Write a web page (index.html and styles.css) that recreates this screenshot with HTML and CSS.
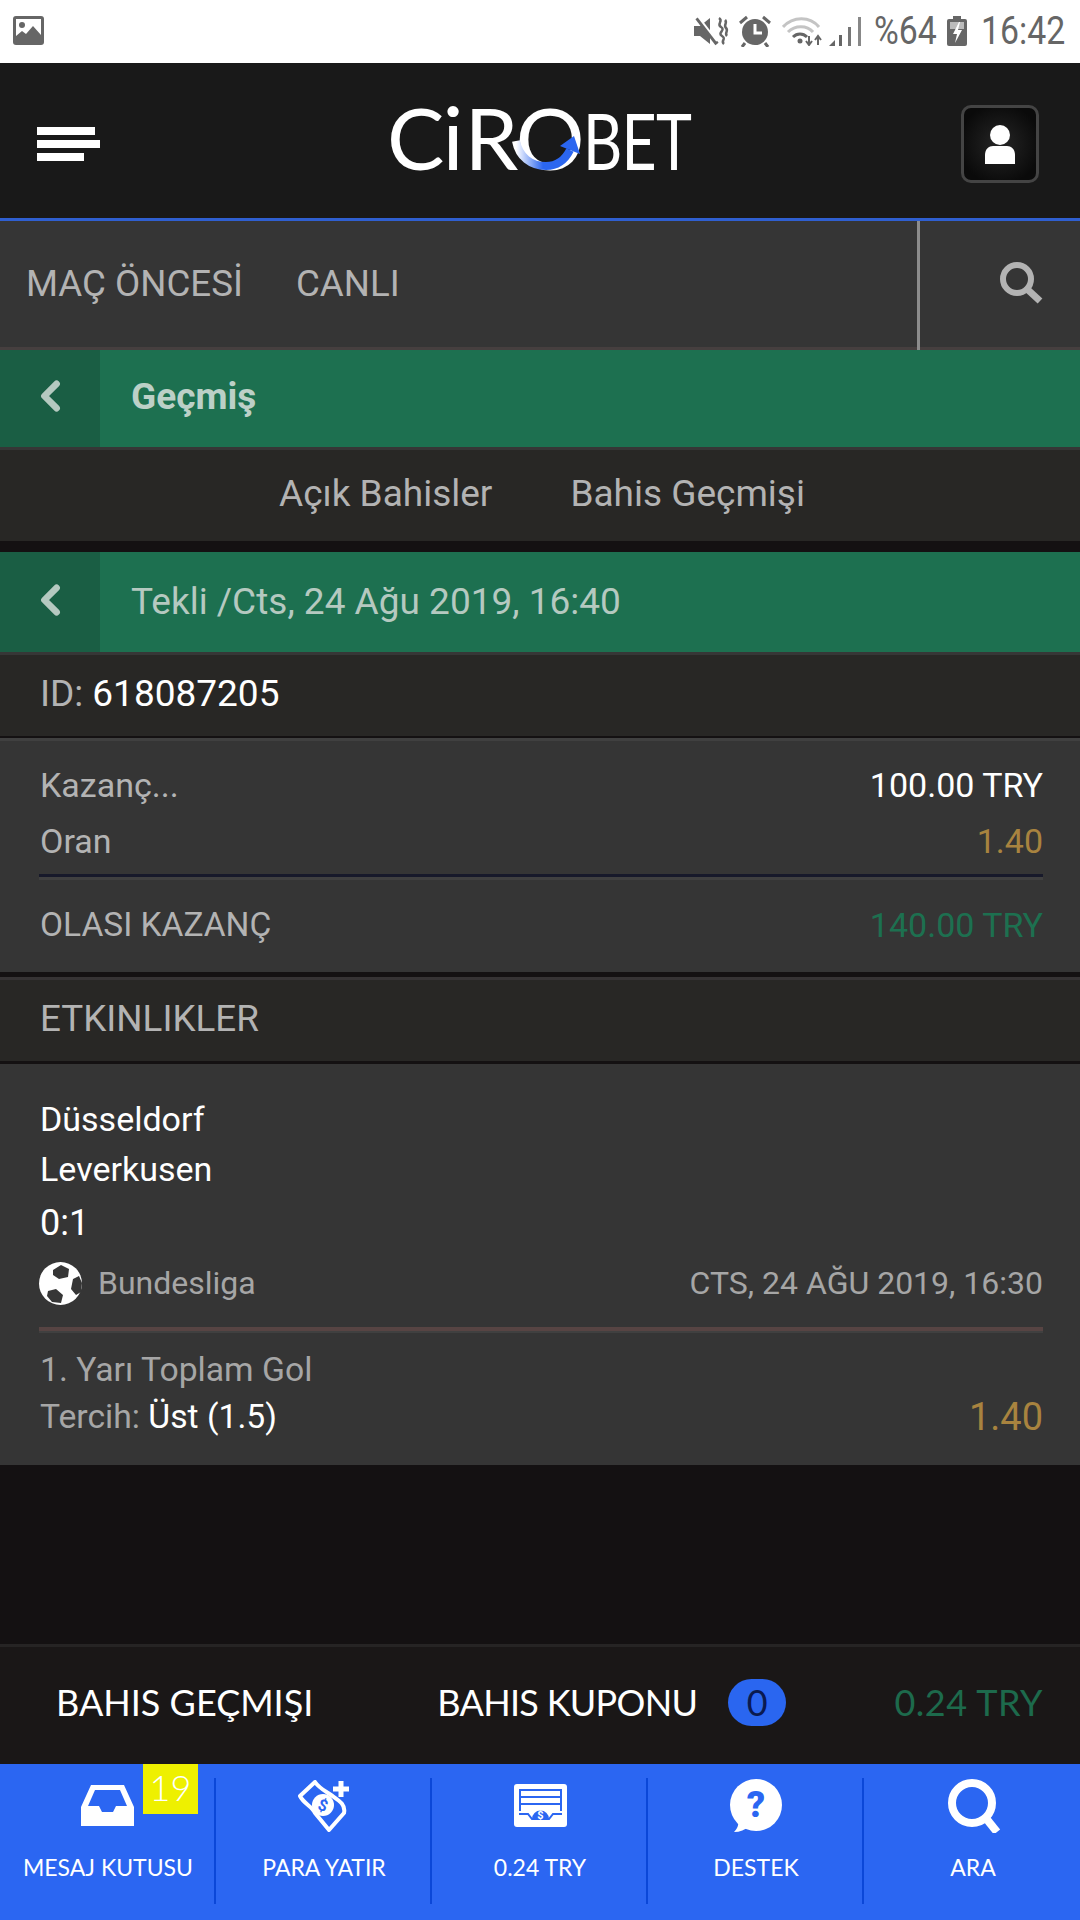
FILE: index.html
```html
<!DOCTYPE html>
<html lang="tr">
<head>
<meta charset="utf-8">
<title>Cirobet</title>
<link rel="stylesheet" href="styles.css">
</head>
<body>
<div class="status">
  <svg class="st-img" viewBox="0 0 31 29"><rect width="31" height="29" rx="3" fill="#666"/><rect x="3" y="3" width="25" height="23" fill="#fff"/><circle cx="9" cy="9" r="3" fill="#666"/><path d="M3 26v-6l6-5 4 3 7-8 8 9v7z" fill="#666"/></svg>
  <div class="st-right">
    <svg class="st-mute" viewBox="0 0 36 30"><path d="M0 10h6l10-8v26L6 20H0z" fill="#666"/><path d="M3 2l20 26" stroke="#666" stroke-width="4"/><path d="M3 -1l20 26" stroke="#fff" stroke-width="2"/><path d="M25 2c5 3-3 6 2 9s-4 6 1 9-2 5 2 8M31 4c3 3-2 5 1 8s-2 5 1 8" fill="none" stroke="#666" stroke-width="2.500"/></svg>
    <svg class="st-alarm" viewBox="0 0 32 32"><circle cx="16" cy="17" r="13" fill="#666"/><path d="M16 9v9h7" fill="none" stroke="#fff" stroke-width="3"/><path d="M1 8l7-6M31 8l-7-6M6 28l-3 4M26 28l3 4" stroke="#666" stroke-width="3"/></svg>
    <svg class="st-wifi" viewBox="0 0 40 30"><path d="M1 11c10-11 27-11 36 0" fill="none" stroke="#c4c4c4" stroke-width="3"/><path d="M6 16c7-7 19-7 25 0" fill="none" stroke="#c4c4c4" stroke-width="3"/><path d="M11 21c4-4 10-4 14 0" fill="none" stroke="#666" stroke-width="3"/><circle cx="18" cy="25" r="2.500" fill="#666"/><path d="M27 20v8M24 25l3 4 3-4M36 29v-9M33 24l3-4 3 4" fill="none" stroke="#666" stroke-width="2"/></svg>
    <svg class="st-sig" viewBox="0 0 32 30"><path d="M0 30l6-6v6z" fill="#666"/><rect x="10" y="19" width="3" height="11" fill="#666"/><rect x="19" y="11" width="3" height="19" fill="#777"/><rect x="29" y="1" width="3" height="29" fill="#888"/></svg>
    <span class="st-txt st-pct">%64</span>
    <svg class="st-batt" viewBox="0 0 20 30"><rect x="6" y="0" width="8" height="3" fill="#666"/><rect y="3" width="20" height="27" rx="2" fill="#666"/><rect x="3" y="6" width="14" height="7" fill="#bbb"/><path d="M12 6l-6 12h4l-2 9 7-13h-4l2-8z" fill="#fff"/></svg>
    <span class="st-txt st-time">16:42</span>
  </div>
</div>

<header class="head">
  <div class="burger"><i class="b1"></i><i class="b2"></i><i class="b3"></i></div>
  <div class="logo">
    <span class="logo-a">C<span class="logo-i">i</span>RO</span><span class="logo-b">BET</span>
    <svg class="logo-arc" viewBox="0 0 70 70">
      <defs><linearGradient id="arc" x1="0" y1="0" x2="1" y2="0"><stop offset="0" stop-color="#fff"/><stop offset=".5" stop-color="#2b66f0"/></linearGradient></defs>
      <path d="M5 37c3 16 15 25 30 25 11 0 19-6 24-16" fill="none" stroke="url(#arc)" stroke-width="8"/>
      <path d="M49 42l14-10 6 18z" fill="#2b66f0"/>
    </svg>
  </div>
  <div class="user">
    <svg class="user-ic" viewBox="0 0 30 39"><ellipse cx="15" cy="10" rx="10" ry="10" fill="#fff"/><path d="M0 39V30c0-6 4-9 8-9h14c4 0 8 3 8 9v9z" fill="#fff"/></svg>
  </div>
</header>

<nav class="nav">
  <div class="nav-links"><span>MAÇ ÖNCESİ</span><span>CANLI</span></div>
  <div class="nav-search">
    <svg class="nav-s-ic" viewBox="0 0 43 42"><circle cx="17" cy="17" r="14" fill="none" stroke="#b3b3b3" stroke-width="6"/><path d="M27 27l13 12" stroke="#b3b3b3" stroke-width="7"/></svg>
  </div>
</nav>

<div class="gbar gbar-1">
  <div class="gbar-back"><svg class="chev" viewBox="0 0 19 30"><path d="M15 4L4 15l11 11" fill="none" stroke="#b5c9c0" stroke-width="6" stroke-linecap="round" stroke-linejoin="round"/></svg></div>
  <div class="gbar-title gbar-bold">Geçmiş</div>
</div>
<div class="tabs-row"><span>Açık Bahisler</span><span>Bahis Geçmişi</span></div>

<div class="gbar gbar-2">
  <div class="gbar-back"><svg class="chev" viewBox="0 0 19 30"><path d="M15 4L4 15l11 11" fill="none" stroke="#b5c9c0" stroke-width="6" stroke-linecap="round" stroke-linejoin="round"/></svg></div>
  <div class="gbar-title">Tekli /Cts, 24 Ağu 2019, 16:40</div>
</div>
<div class="id-row">ID: <b>618087205</b></div>

<section class="panel">
  <div class="row"><span>Kazanç...</span><b>100.00 TRY</b></div>
  <div class="row"><span>Oran</span><em>1.40</em></div>
  <div class="rule"></div>
  <div class="row row-total"><span class="total-lbl">OLASI KAZANÇ</span><u>140.00 TRY</u></div>
</section>

<div class="sec-title">ETKINLIKLER</div>

<section class="event">
  <div class="team">Düsseldorf</div>
  <div class="team">Leverkusen</div>
  <div class="score">0:1</div>
  <div class="league">
    <svg class="ball" viewBox="0 0 43 43"><circle cx="21.500" cy="21.500" r="21.500" fill="#fff"/><path d="M14 8l8-5 8 4-1 8-9 2-6-4zM34 17l6-3 3 7-1 9-5 3-5-6zM9 29l8-2 7 6-2 8-9-1-5-6z" fill="#363636"/></svg>
    <span class="lg-name">Bundesliga</span>
    <span class="lg-date">CTS, 24 AĞU 2019, 16:30</span>
  </div>
  <div class="ev-rule"></div>
  <div class="market">1. Yarı Toplam Gol</div>
  <div class="pick"><span>Tercih: <b>Üst (1.5)</b></span><em>1.40</em></div>
</section>

<div class="spacer"></div>

<div class="betbar">
  <span class="bb-a">BAHIS GEÇMIŞI</span>
  <span class="bb-b">BAHIS KUPONU</span>
  <span class="bb-count">0</span>
  <span class="bb-val">0.24 TRY</span>
</div>

<div class="tabbar">
  <div class="tab">
    <span class="badge">19</span>
    <svg class="tab-ic ic-tray" viewBox="0 0 53 41"><path fill-rule="evenodd" fill="#fff" d="M10 0h33l10 22v19H0V22zM14 5l-7 16h11l3 6h11l3-6h11L39 5z"/></svg>
    <span class="tab-lbl">MESAJ KUTUSU</span>
  </div>
  <div class="tab">
    <svg class="tab-ic ic-money" viewBox="0 0 53 52"><path d="M17 2L2 16c4 8 12 10 15 17l14 17 15-17c2-9-6-13-13-18-6-4-12-7-16-13z" fill="none" stroke="#fff" stroke-width="4" stroke-linejoin="round"/><circle cx="25" cy="25" r="11" fill="#fff"/><text x="25" y="31" class="ic-dollar" transform="rotate(20 25 25)">$</text><path d="M43 1v16M35 9h16" stroke="#fff" stroke-width="5"/></svg>
    <span class="tab-lbl">PARA YATIR</span>
  </div>
  <div class="tab">
    <svg class="tab-ic ic-reg" viewBox="0 0 53 43"><rect width="53" height="43" rx="3" fill="#fff"/><rect x="5" y="5" width="43" height="26" fill="#2b66f2"/><path d="M7 7h39v5H7zM7 14h39v5H7zM7 21h39v6H7z" fill="#fff"/><rect x="5" y="27" width="43" height="5" fill="#fff"/><path d="M5 30h9l4 5h17l4-5h9" fill="none" stroke="#2b66f2" stroke-width="2"/><path d="M18 35a8.500 8.500 0 0 1 17 0z" fill="#2b66f2"/><text x="26.500" y="35" class="ic-dollar ic-d-s">$</text></svg>
    <span class="tab-lbl">0.24 TRY</span>
  </div>
  <div class="tab">
    <svg class="tab-ic ic-help" viewBox="0 0 53 53"><circle cx="27" cy="26" r="26" fill="#fff"/><path d="M9 40c1 5 0 9-4 13 6 0 11-2 15-6z" fill="#fff"/><text x="27" y="38" class="ic-q">?</text></svg>
    <span class="tab-lbl">DESTEK</span>
  </div>
  <div class="tab tab-last">
    <svg class="tab-ic ic-search" viewBox="0 0 54 54"><circle cx="25" cy="24" r="20" fill="none" stroke="#fff" stroke-width="8"/><path d="M38 38l12 15" stroke="#fff" stroke-width="8"/></svg>
    <span class="tab-lbl">ARA</span>
  </div>
</div>
</body>
</html>
```

FILE: styles.css
```css
* { box-sizing: border-box; }
html, body { margin: 0; padding: 0; }
body {
  width: 1080px;
  height: 1920px;
  overflow: hidden;
  display: flex;
  flex-direction: column;
  background: #141112;
  font-family: Roboto, "Liberation Sans", sans-serif;
  color: #b3b3b3;
}
b, em, u { font-weight: 400; font-style: normal; text-decoration: none; }

/* Status bar */
.status {
  flex: 0 0 63px;
  background: #fff;
  display: flex;
  align-items: center;
  justify-content: space-between;
  padding: 0 15px 2px 13px;
}
.st-img { width: 31px; height: 29px; display: block; }
.st-right { display: flex; align-items: center; }
.st-mute { width: 36px; height: 30px; margin-right: 9px; }
.st-alarm { width: 32px; height: 32px; margin-right: 11px; }
.st-wifi { width: 40px; height: 30px; margin-right: 7px; }
.st-sig { width: 32px; height: 30px; margin-right: 13px; }
.st-batt { width: 20px; height: 30px; margin-right: 14px; }
.st-txt {
  font-size: 38px;
  line-height: 40px;
  color: #666;
  display: inline-block;
  transform-origin: left center;
  transform: scaleX(.89);
}
.st-pct { width: 62px; margin-right: 11px; }
.st-time { width: 84px; }

/* Header */
.head {
  flex: 0 0 158px;
  background: #191919;
  border-bottom: 3px solid #2f5fd0;
  position: relative;
  display: flex;
  align-items: center;
  justify-content: space-between;
  padding: 7px 41px 0 37px;
}
.burger { display: flex; flex-direction: column; gap: 5px; }
.burger i { display: block; height: 8px; background: #fff; }
.b1 { width: 58px; }
.b2 { width: 63px; }
.b3 { width: 47px; }

.logo {
  position: relative;
  display: flex;
  align-items: baseline;
  font-family: Lato, sans-serif;
  color: #fff;
  line-height: 80px;
  margin-left: 15px;
  margin-bottom: 12px;
  width: 302px;
}
.logo-a { font-size: 86px; font-weight: 400; letter-spacing: -2px; }
.logo-i { font-size: 88px; letter-spacing: 1px; }
.logo-b {
  font-size: 78px;
  font-weight: 400;
  letter-spacing: -1px;
  display: inline-block;
  transform-origin: left bottom;
  transform: scaleX(.78);
}
.logo-arc { position: absolute; left: 124px; top: 8px; width: 70px; height: 70px; }

.user {
  width: 78px;
  height: 78px;
  border: 3px solid #444;
  border-radius: 10px;
  background: radial-gradient(circle, #262626 0%, #0a0a0a 80%);
  display: flex;
  align-items: center;
  justify-content: center;
}
.user-ic { width: 30px; height: 39px; display: block; }

/* Nav */
.nav {
  flex: 0 0 129px;
  background: #353535;
  border-bottom: 3px solid #463f3f;
  display: flex;
  justify-content: space-between;
  font-size: 36.7px;
}
.nav-links { display: flex; align-items: center; gap: 53px; padding-left: 26px; padding-bottom: 2px; }
.nav-search {
  width: 163px;
  margin-bottom: -3px;
  border-left: 3px solid #8c8c8c;
  display: flex;
  align-items: center;
  justify-content: flex-end;
  padding: 0 37px 6px 0;
}
.nav-s-ic { width: 43px; height: 42px; display: block; }

/* Green bars */
.gbar { display: flex; background: #1d7050; color: #b5c9c0; font-size: 37px; flex: 0 0 auto; }
.gbar-1 { height: 97px; }
.gbar-2 { height: 100px; margin-top: 11px; }
.gbar-back {
  width: 100px;
  background: #1a5e44;
  display: flex;
  align-items: center;
  padding-left: 40px;
  padding-bottom: 5px;
}
.chev { width: 21px; height: 34px; display: block; }
.gbar-title { padding-left: 31px; display: flex; align-items: center; padding-bottom: 1px; }
.gbar-bold { font-weight: 700; color: #bcd0c7; padding-bottom: 5px; }

.tabs-row {
  flex: 0 0 94px;
  background: #282725;
  border-top: 3px solid #363636;
  display: flex;
  align-items: center;
  font-size: 37px;
  gap: 78px;
  padding: 0 0 4px 279px;
}

.id-row {
  flex: 0 0 84px;
  background: #282725;
  border-top: 3px solid #363636;
  display: flex;
  align-items: center;
  gap: 9px;
  padding: 0 40px 4px 40px;
  font-size: 37px;
}
.id-row b { color: #fff; }

/* Summary panel */
.panel {
  flex: 0 0 auto;
  margin-top: 2px;
  height: 234px;
  background: #353535;
  border-top: 3px solid #404040;
  padding: 16px 37px 0 40px;
  font-size: 34px;
}
.row { display: flex; justify-content: space-between; align-items: center; height: 56px; }
.row b { color: #fff; }
.row em, .pick em { color: #a8833f; }
.row u { color: #1d7050; }
.rule {
  margin: 5px 0 0 -1px;
  height: 6px;
  background: #17192a;
  border-bottom: 3px solid #404040;
}
.row-total { height: 89px; }
.total-lbl { font-size: 33.5px; }

.sec-title {
  flex: 0 0 auto;
  height: 84px;
  margin-top: 5px;
  background: #282725;
  border-top: 3px solid #363334;
  display: flex;
  align-items: center;
  padding: 0 40px 4px;
  font-size: 36.8px;
}

/* Event */
.event {
  flex: 0 0 auto;
  height: 401px;
  margin-top: 3px;
  background: #353535;
  padding: 30px 37px 0 40px;
  font-size: 34px;
}
.team { color: #fff; height: 50px; line-height: 50px; }
.score { color: #fff; height: 58px; line-height: 58px; font-size: 36px; }
.league {
  display: flex;
  align-items: center;
  height: 46px;
  margin-left: -1px;
  margin-top: 8px;
  font-size: 32px;
  color: #a6a6a6;
}
.ball { width: 43px; height: 43px; display: block; margin-right: 16px; }
.lg-date { margin-left: auto; }
.ev-rule {
  height: 6px;
  margin: 21px 0 0 -1px;
  background: #574443;
  border-bottom: 2px solid #404040;
}
.market { height: 48px; line-height: 48px; margin-top: 13px; font-size: 33.7px; color: #a6a6a6; }
.pick { display: flex; justify-content: space-between; align-items: center; height: 45px; font-size: 33.7px; color: #a6a6a6; }
.pick b { color: #fff; }
.pick em { font-size: 38px; }

.spacer { flex: 1 1 auto; }

/* Bet bar */
.betbar {
  flex: 0 0 120px;
  background: #1a1717;
  border-top: 3px solid #262424;
  display: flex;
  align-items: center;
  padding: 0 37px 7px 56px;
  font-family: Lato, sans-serif;
  font-size: 36px;
  color: #fff;
}
.bb-b { margin-left: 124px; letter-spacing: -.7px; }
.bb-count {
  width: 58px;
  height: 47px;
  border-radius: 24px;
  background: #2a66f0;
  color: #0a1a50;
  display: flex;
  align-items: center;
  justify-content: center;
  margin-left: 31px;
}
.bb-val { margin-left: auto; color: #1d6a4c; letter-spacing: .5px; }

/* Bottom tabs */
.tabbar {
  flex: 0 0 156px;
  background: #2b66f2;
  display: grid;
  grid-template-columns: repeat(5, 1fr);
  padding-top: 14px;
}
.tab {
  position: relative;
  height: 126px;
  border-right: 2px solid #0b47d8;
  display: flex;
  flex-direction: column;
  align-items: center;
  color: #fff;
}
.tab-last { border-right: 0; }
.tab-ic { display: block; height: 54px; }
.ic-tray { width: 53px; height: 41px; margin: 7px 0 6px; }
.ic-money { width: 53px; height: 52px; margin: 2px 0 0 2px; }
.ic-reg { width: 53px; height: 43px; margin: 6px 0 5px 2px; }
.ic-help { width: 53px; height: 53px; margin: 1px 0 0 1px; }
.ic-search { width: 54px; height: 54px; margin: 1px 0 -1px 3px; }
.ic-dollar { font: 700 16px Roboto, sans-serif; fill: #2b66f2; text-anchor: middle; }
.ic-d-s { font-size: 11px; fill: #fff; }
.ic-q { font: 900 36px Roboto, sans-serif; fill: #2b66f2; text-anchor: middle; }
.tab-lbl {
  position: absolute;
  left: 2px;
  right: 0;
  top: 74px;
  text-align: center;
  font-family: Lato, sans-serif;
  font-size: 23px;
  line-height: 30px;
}
.badge {
  position: absolute;
  left: 143px;
  top: -14px;
  width: 55px;
  height: 50px;
  background: #eef000;
  color: #fff;
  font-family: Lato, sans-serif;
  font-weight: 300;
  font-size: 36px;
  line-height: 46px;
  text-align: center;
}
```
